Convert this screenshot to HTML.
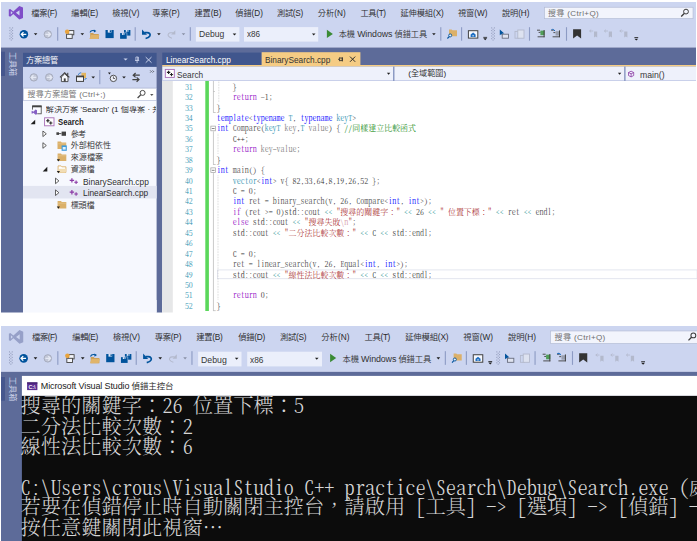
<!DOCTYPE html>
<html lang="zh-Hant"><head><meta charset="utf-8"><title>Visual Studio - Search</title>
<style>
html,body{margin:0;padding:0;background:#fff;}
body{width:697px;height:541px;position:relative;overflow:hidden;font-family:"Liberation Sans","Noto Sans CJK TC","Noto Sans CJK SC",sans-serif;font-size:8px;color:#1e1e1e;font-weight:350;}
.a{position:absolute;}
.t{position:absolute;white-space:pre;line-height:1;transform-origin:0 50%;}
.m{font-family:"Noto Serif CJK TC","Noto Serif CJK SC","Liberation Mono",monospace;font-feature-settings:"hwid";}
.f{font-feature-settings:normal;}
svg{position:absolute;overflow:visible;}
</style></head>
<body>
<svg width="697" height="541" viewBox="0 0 697 541" style="left:0;top:0">
<rect x="1.00" y="2.00" width="695.00" height="45.60" fill="#CCD5F0"/>
<path d="M1 47.6H696V300H162.25V312.5H156.6V300H23V312.5H1Z" fill="#5D6B99"/>
<rect x="1.00" y="51.70" width="4.00" height="24.30" fill="#46578E"/>
<rect x="544.45" y="7.25" width="148.60" height="11.40" fill="#F2F4FC" stroke="#b4bcd6" stroke-width="0.7"/>
<rect x="195.90" y="27.10" width="43.50" height="14.50" fill="#EBEFFB"/>
<rect x="244.00" y="27.10" width="74.20" height="14.50" fill="#EBEFFB"/>
<rect x="23.00" y="52.80" width="133.60" height="14.10" fill="#40568D"/>
<rect x="23.00" y="66.90" width="133.60" height="21.00" fill="#CCD5F0"/>
<rect x="23.30" y="88.20" width="133.00" height="12.50" fill="#ffffff" stroke="#c8cfe6" stroke-width="0.6"/>
<rect x="23.00" y="101.00" width="133.60" height="211.50" fill="#F6F8FE"/>
<rect x="23.00" y="185.90" width="133.60" height="12.60" fill="#E2E5F1"/>
<rect x="162.25" y="52.60" width="98.95" height="12.60" fill="#40568D"/>
<rect x="261.70" y="52.20" width="98.70" height="13.00" fill="#F5CC84"/>
<rect x="162.25" y="65.00" width="533.75" height="1.60" fill="#F5CC84"/>
<rect x="162.25" y="66.50" width="533.75" height="14.50" fill="#EEF1FB"/>
<rect x="162.25" y="80.00" width="533.75" height="1.00" fill="#C9D0EA"/>
<rect x="393.00" y="66.50" width="1.50" height="14.50" fill="#8D9BC4"/>
<rect x="624.10" y="66.50" width="1.50" height="14.50" fill="#8D9BC4"/>
<rect x="162.25" y="81.00" width="534.75" height="231.50" fill="#ffffff"/>
<rect x="162.25" y="81.00" width="10.55" height="231.50" fill="#E6E7E8"/>
<rect x="205.30" y="81.00" width="3.60" height="230.00" fill="#5BD75B"/>
<rect x="217.40" y="269.92" width="479.70" height="8.80" fill="none" stroke="#dcdfeb" stroke-width="0.8"/>
<rect x="212.95" y="81.00" width="0.70" height="31.68" fill="#b4b4b4"/>
<rect x="213.30" y="112.03" width="2.40" height="0.70" fill="#b4b4b4"/>
<rect x="213.30" y="91.25" width="1.60" height="0.70" fill="#b4b4b4"/>
<rect x="212.95" y="131.36" width="0.70" height="33.52" fill="#b4b4b4"/>
<rect x="213.30" y="164.23" width="2.40" height="0.70" fill="#b4b4b4"/>
<rect x="212.95" y="173.12" width="0.70" height="137.92" fill="#b4b4b4"/>
<rect x="213.30" y="310.39" width="2.40" height="0.70" fill="#b4b4b4"/>
<rect x="210.85" y="126.11" width="4.70" height="4.70" fill="#ffffff" stroke="#a0a0a0" stroke-width="0.7"/>
<rect x="211.80" y="128.11" width="2.80" height="0.70" fill="#555"/>
<rect x="210.85" y="167.87" width="4.70" height="4.70" fill="#ffffff" stroke="#a0a0a0" stroke-width="0.7"/>
<rect x="211.80" y="169.87" width="2.80" height="0.70" fill="#555"/>
<path d="M218.80 80.60V102.04" stroke="#bdbdbd" stroke-width="0.7" stroke-dasharray="0.7 0.9" fill="none"/>
<path d="M218.00 175.56V300.40" stroke="#bdbdbd" stroke-width="0.7" stroke-dasharray="0.7 0.9" fill="none"/>
<path d="M218.00 133.80V154.24" stroke="#bdbdbd" stroke-width="0.7" stroke-dasharray="0.7 0.9" fill="none"/>
<rect x="1.00" y="326.00" width="696.00" height="45.80" fill="#CCD5F0"/>
<rect x="1.00" y="371.80" width="696.00" height="169.20" fill="#5D6B99"/>
<rect x="1.00" y="377.00" width="4.00" height="23.70" fill="#46578E"/>
<rect x="550.45" y="330.95" width="149.20" height="12.60" fill="#F2F4FC" stroke="#b4bcd6" stroke-width="0.7"/>
<rect x="198.10" y="351.70" width="43.40" height="14.70" fill="#EBEFFB"/>
<rect x="247.20" y="351.70" width="74.80" height="14.70" fill="#EBEFFB"/>
<rect x="21.90" y="375.90" width="675.10" height="20.00" fill="#ffffff"/>
<rect x="21.90" y="395.90" width="675.10" height="145.10" fill="#0C0C0C"/>
</svg>
<span class="t" style="left:9.00px;top:-4.00px;font-size:8.00px;color:#d5dcf0;top:52.4px;left:16.4px;line-height:1;transform-origin:0 0;transform:rotate(90deg);">工具箱</span>
<span class="t" style="left:31.20px;top:9.80px;font-size:8.20px;color:#2a2a2a;letter-spacing:-0.211px;">檔案(F)</span>
<span class="t" style="left:71.30px;top:9.80px;font-size:8.20px;color:#2a2a2a;letter-spacing:-0.099px;">編輯(E)</span>
<span class="t" style="left:112.20px;top:9.80px;font-size:8.20px;color:#2a2a2a;letter-spacing:-0.024px;">檢視(V)</span>
<span class="t" style="left:152.30px;top:9.80px;font-size:8.20px;color:#2a2a2a;letter-spacing:0.051px;">專案(P)</span>
<span class="t" style="left:194.40px;top:9.80px;font-size:8.20px;color:#2a2a2a;letter-spacing:-0.049px;">建置(B)</span>
<span class="t" style="left:235.20px;top:9.80px;font-size:8.20px;color:#2a2a2a;letter-spacing:0.013px;">偵錯(D)</span>
<span class="t" style="left:277.00px;top:9.80px;font-size:8.20px;color:#2a2a2a;letter-spacing:-0.274px;">測試(S)</span>
<span class="t" style="left:317.80px;top:9.80px;font-size:8.20px;color:#2a2a2a;letter-spacing:0.037px;">分析(N)</span>
<span class="t" style="left:360.40px;top:9.80px;font-size:8.20px;color:#2a2a2a;letter-spacing:-0.286px;">工具(T)</span>
<span class="t" style="left:400.40px;top:9.80px;font-size:8.20px;color:#2a2a2a;letter-spacing:-0.045px;">延伸模組(X)</span>
<span class="t" style="left:457.90px;top:9.80px;font-size:8.20px;color:#2a2a2a;letter-spacing:-0.016px;">視窗(W)</span>
<span class="t" style="left:502.00px;top:9.80px;font-size:8.20px;color:#2a2a2a;letter-spacing:-0.088px;">說明(H)</span>
<span class="t" style="left:547.90px;top:9.50px;font-size:8.00px;color:#6d6d6d;letter-spacing:0.391px;">搜尋 (Ctrl+Q)</span>
<span class="t" style="left:198.70px;top:30.20px;font-size:8.60px;color:#383838;transform:scaleX(0.9989);">Debug</span>
<span class="t" style="left:246.90px;top:30.20px;font-size:8.60px;color:#383838;transform:scaleX(0.9452);">x86</span>
<span class="t" style="left:338.70px;top:30.30px;font-size:8.20px;color:#333;letter-spacing:-0.070px;">本機 <span style="font-size:8.8px">Windows</span> 偵錯工具</span>
<span class="t" style="left:26.00px;top:56.80px;font-size:8.20px;color:#ffffff;letter-spacing:-0.189px;">方案總管</span>
<span class="t" style="left:27.60px;top:90.60px;font-size:8.00px;color:#717171;letter-spacing:0.201px;">搜尋方案總管 (Ctrl+;)</span>
<span class="t" style="left:45.80px;top:105.85px;font-size:8.10px;color:#1e1e1e;width:110.5px;overflow:hidden;">解決方案 'Search' (1 個專案 · 共 1 個)</span>
<span class="t" style="left:58.00px;top:118.20px;font-size:8.60px;color:#1e1e1e;font-weight:700;transform:scaleX(0.8998);">Search</span>
<span class="t" style="left:70.70px;top:130.85px;font-size:8.10px;color:#2e2e2e;letter-spacing:-0.703px;">參考</span>
<span class="t" style="left:70.70px;top:142.35px;font-size:8.10px;color:#2e2e2e;letter-spacing:-0.046px;">外部相依性</span>
<span class="t" style="left:70.70px;top:154.15px;font-size:8.10px;color:#2e2e2e;letter-spacing:0.036px;">來源檔案</span>
<span class="t" style="left:70.70px;top:166.35px;font-size:8.10px;color:#2e2e2e;letter-spacing:-0.248px;">資源檔</span>
<span class="t" style="left:82.60px;top:177.60px;font-size:8.60px;color:#2e2e2e;transform:scaleX(0.9699);">BinarySearch.cpp</span>
<span class="t" style="left:82.60px;top:189.40px;font-size:8.60px;color:#2e2e2e;transform:scaleX(0.9677);">LinearSearch.cpp</span>
<span class="t" style="left:70.70px;top:202.05px;font-size:8.10px;color:#2e2e2e;letter-spacing:-0.248px;">標頭檔</span>
<span class="t" style="left:165.60px;top:55.95px;font-size:8.50px;color:#ffffff;transform:scaleX(0.9739);">LinearSearch.cpp</span>
<span class="t" style="left:264.80px;top:56.15px;font-size:8.50px;color:#333333;transform:scaleX(0.9733);">BinarySearch.cpp</span>
<span class="t" style="left:176.80px;top:70.70px;font-size:8.60px;color:#383838;transform:scaleX(0.9620);">Search</span>
<span class="t" style="left:408.20px;top:70.15px;font-size:8.10px;color:#1e1e1e;letter-spacing:0.024px;">(全域範圍)</span>
<span class="t" style="left:639.90px;top:70.70px;font-size:8.60px;color:#383838;transform:scaleX(1.0099);">main()</span>
<span class="t m" style="left:184.90px;top:82.62px;font-size:7.97px;color:#2b91af;">31</span>
<span class="t m" style="left:216.85px;top:82.62px;font-size:7.97px;color:#2e2e2e;font-weight:300;">    }</span>
<span class="t m" style="left:184.90px;top:93.06px;font-size:7.97px;color:#2b91af;">32</span>
<span class="t m" style="left:216.85px;top:93.06px;font-size:7.97px;color:#2e2e2e;font-weight:300;">    <span style="color:#8f08c4">return</span> -1;</span>
<span class="t m" style="left:184.90px;top:103.50px;font-size:7.97px;color:#2b91af;">33</span>
<span class="t m" style="left:216.85px;top:103.50px;font-size:7.97px;color:#2e2e2e;font-weight:300;">}</span>
<span class="t m" style="left:184.90px;top:113.94px;font-size:7.97px;color:#2b91af;">34</span>
<span class="t m" style="left:216.85px;top:113.94px;font-size:7.97px;color:#2e2e2e;font-weight:300;"><span style="color:#0000ff">template</span>&lt;<span style="color:#0000ff">typename</span> <span style="color:#2b91af">T</span>, <span style="color:#0000ff">typename</span> <span style="color:#2b91af">keyT</span>&gt;</span>
<span class="t m" style="left:184.90px;top:124.38px;font-size:7.97px;color:#2b91af;">35</span>
<span class="t m" style="left:216.85px;top:124.38px;font-size:7.97px;color:#2e2e2e;font-weight:300;"><span style="color:#0000ff">int</span> <span style="color:#4a4a4a">Compare</span>(<span style="color:#2b91af">keyT</span> <span style="color:#808080">key</span>,<span style="color:#2b91af">T</span> <span style="color:#808080">value</span>) { <span style="color:#008000">//同樣建立比較函式</span></span>
<span class="t m" style="left:184.90px;top:134.82px;font-size:7.97px;color:#2b91af;">36</span>
<span class="t m" style="left:216.85px;top:134.82px;font-size:7.97px;color:#2e2e2e;font-weight:300;">    C++;</span>
<span class="t m" style="left:184.90px;top:145.26px;font-size:7.97px;color:#2b91af;">37</span>
<span class="t m" style="left:216.85px;top:145.26px;font-size:7.97px;color:#2e2e2e;font-weight:300;">    <span style="color:#8f08c4">return</span> <span style="color:#808080">key</span>-<span style="color:#808080">value</span>;</span>
<span class="t m" style="left:184.90px;top:155.70px;font-size:7.97px;color:#2b91af;">38</span>
<span class="t m" style="left:216.85px;top:155.70px;font-size:7.97px;color:#2e2e2e;font-weight:300;">}</span>
<span class="t m" style="left:184.90px;top:166.14px;font-size:7.97px;color:#2b91af;">39</span>
<span class="t m" style="left:216.85px;top:166.14px;font-size:7.97px;color:#2e2e2e;font-weight:300;"><span style="color:#0000ff">int</span> <span style="color:#4a4a4a">main</span>() {</span>
<span class="t m" style="left:184.90px;top:176.58px;font-size:7.97px;color:#2b91af;">40</span>
<span class="t m" style="left:216.85px;top:176.58px;font-size:7.97px;color:#2e2e2e;font-weight:300;">    <span style="color:#2b91af">vector</span>&lt;<span style="color:#0000ff">int</span>&gt; <span style="color:#4a4a4a">v</span>{ 82,33,64,8,19,26,52 };</span>
<span class="t m" style="left:184.90px;top:187.02px;font-size:7.97px;color:#2b91af;">41</span>
<span class="t m" style="left:216.85px;top:187.02px;font-size:7.97px;color:#2e2e2e;font-weight:300;">    C = 0;</span>
<span class="t m" style="left:184.90px;top:197.46px;font-size:7.97px;color:#2b91af;">42</span>
<span class="t m" style="left:216.85px;top:197.46px;font-size:7.97px;color:#2e2e2e;font-weight:300;">    <span style="color:#0000ff">int</span> <span style="color:#4a4a4a">ret</span> = <span style="color:#4a4a4a">binary_search</span>(<span style="color:#4a4a4a">v</span>, 26, <span style="color:#4a4a4a">Compare</span>&lt;<span style="color:#0000ff">int</span>, <span style="color:#0000ff">int</span>&gt;);</span>
<span class="t m" style="left:184.90px;top:207.90px;font-size:7.97px;color:#2b91af;">43</span>
<span class="t m" style="left:216.85px;top:207.90px;font-size:7.97px;color:#2e2e2e;font-weight:300;">    <span style="color:#8f08c4">if</span> (<span style="color:#4a4a4a">ret</span> &gt;= 0)std::<span style="color:#4a4a4a">cout</span> <span style="color:#008080">&lt;&lt;</span> <span style="color:#a31515">"搜尋的關鍵字<span class="f">：</span>"</span> <span style="color:#008080">&lt;&lt;</span> 26 <span style="color:#008080">&lt;&lt;</span> <span style="color:#a31515">" 位置下標<span class="f">：</span>"</span> <span style="color:#008080">&lt;&lt;</span> <span style="color:#4a4a4a">ret</span> <span style="color:#008080">&lt;&lt;</span> <span style="color:#4a4a4a">endl</span>;</span>
<span class="t m" style="left:184.90px;top:218.34px;font-size:7.97px;color:#2b91af;">44</span>
<span class="t m" style="left:216.85px;top:218.34px;font-size:7.97px;color:#2e2e2e;font-weight:300;">    <span style="color:#8f08c4">else</span> std::<span style="color:#4a4a4a">cout</span> <span style="color:#008080">&lt;&lt;</span> <span style="color:#a31515">"搜尋失敗</span><span style="color:#d69aa7">\n</span><span style="color:#a31515">"</span>;</span>
<span class="t m" style="left:184.90px;top:228.78px;font-size:7.97px;color:#2b91af;">45</span>
<span class="t m" style="left:216.85px;top:228.78px;font-size:7.97px;color:#2e2e2e;font-weight:300;">    std::<span style="color:#4a4a4a">cout</span> <span style="color:#008080">&lt;&lt;</span> <span style="color:#a31515">"二分法比較次數<span class="f">：</span>"</span> <span style="color:#008080">&lt;&lt;</span> C <span style="color:#008080">&lt;&lt;</span> std::<span style="color:#4a4a4a">endl</span>;</span>
<span class="t m" style="left:184.90px;top:239.22px;font-size:7.97px;color:#2b91af;">46</span>
<span class="t m" style="left:184.90px;top:249.66px;font-size:7.97px;color:#2b91af;">47</span>
<span class="t m" style="left:216.85px;top:249.66px;font-size:7.97px;color:#2e2e2e;font-weight:300;">    C = 0;</span>
<span class="t m" style="left:184.90px;top:260.10px;font-size:7.97px;color:#2b91af;">48</span>
<span class="t m" style="left:216.85px;top:260.10px;font-size:7.97px;color:#2e2e2e;font-weight:300;">    <span style="color:#4a4a4a">ret</span> = <span style="color:#4a4a4a">linear_search</span>(<span style="color:#4a4a4a">v</span>, 26, <span style="color:#4a4a4a">Equal</span>&lt;<span style="color:#0000ff">int</span>, <span style="color:#0000ff">int</span>&gt;);</span>
<span class="t m" style="left:184.90px;top:270.54px;font-size:7.97px;color:#2b91af;">49</span>
<span class="t m" style="left:216.85px;top:270.54px;font-size:7.97px;color:#2e2e2e;font-weight:300;">    std::<span style="color:#4a4a4a">cout</span> <span style="color:#008080">&lt;&lt;</span> <span style="color:#a31515">"線性法比較次數<span class="f">：</span>"</span> <span style="color:#008080">&lt;&lt;</span> C <span style="color:#008080">&lt;&lt;</span> std::<span style="color:#4a4a4a">endl</span>;</span>
<span class="t m" style="left:184.90px;top:280.98px;font-size:7.97px;color:#2b91af;">50</span>
<span class="t m" style="left:184.90px;top:291.42px;font-size:7.97px;color:#2b91af;">51</span>
<span class="t m" style="left:216.85px;top:291.42px;font-size:7.97px;color:#2e2e2e;font-weight:300;">    <span style="color:#8f08c4">return</span> 0;</span>
<span class="t m" style="left:184.90px;top:301.86px;font-size:7.97px;color:#2b91af;">52</span>
<span class="t m" style="left:216.85px;top:301.86px;font-size:7.97px;color:#2e2e2e;font-weight:300;">}</span>
<span class="t" style="left:10.00px;top:-4.05px;font-size:8.10px;color:#d5dcf0;top:377.2px;left:16.3px;line-height:1;transform-origin:0 0;transform:rotate(90deg);">工具箱</span>
<span class="t" style="left:32.10px;top:333.35px;font-size:8.30px;color:#2a2a2a;letter-spacing:-0.476px;">檔案(F)</span>
<span class="t" style="left:72.30px;top:333.35px;font-size:8.30px;color:#2a2a2a;letter-spacing:-0.439px;">編輯(E)</span>
<span class="t" style="left:112.90px;top:333.35px;font-size:8.30px;color:#2a2a2a;letter-spacing:-0.139px;">檢視(V)</span>
<span class="t" style="left:154.80px;top:333.35px;font-size:8.30px;color:#2a2a2a;letter-spacing:-0.264px;">專案(P)</span>
<span class="t" style="left:196.30px;top:333.35px;font-size:8.30px;color:#2a2a2a;letter-spacing:-0.314px;">建置(B)</span>
<span class="t" style="left:238.20px;top:333.35px;font-size:8.30px;color:#2a2a2a;letter-spacing:-0.256px;">偵錯(D)</span>
<span class="t" style="left:280.10px;top:333.35px;font-size:8.30px;color:#2a2a2a;letter-spacing:-0.314px;">測試(S)</span>
<span class="t" style="left:321.20px;top:333.35px;font-size:8.30px;color:#2a2a2a;letter-spacing:0.069px;">分析(N)</span>
<span class="t" style="left:364.60px;top:333.35px;font-size:8.30px;color:#2a2a2a;letter-spacing:-0.351px;">工具(T)</span>
<span class="t" style="left:405.20px;top:333.35px;font-size:8.30px;color:#2a2a2a;letter-spacing:-0.142px;">延伸模組(X)</span>
<span class="t" style="left:463.30px;top:333.35px;font-size:8.30px;color:#2a2a2a;letter-spacing:-0.063px;">視窗(W)</span>
<span class="t" style="left:508.00px;top:333.35px;font-size:8.30px;color:#2a2a2a;letter-spacing:-0.006px;">說明(H)</span>
<span class="t" style="left:554.60px;top:333.65px;font-size:8.10px;color:#6d6d6d;letter-spacing:0.326px;">搜尋 (Ctrl+Q)</span>
<span class="t" style="left:200.70px;top:355.95px;font-size:8.70px;color:#383838;transform:scaleX(1.0074);">Debug</span>
<span class="t" style="left:249.80px;top:355.95px;font-size:8.70px;color:#383838;transform:scaleX(0.9561);">x86</span>
<span class="t" style="left:342.60px;top:354.65px;font-size:8.30px;color:#333;letter-spacing:-0.130px;">本機 <span style="font-size:8.9px">Windows</span> 偵錯工具</span>
<span class="t" style="left:40.80px;top:381.65px;font-size:8.50px;color:#1a1a1a;letter-spacing:-0.124px;"><span style="font-size:9.0px">Microsoft Visual Studio</span> 偵錯主控台</span>
<span class="t m" style="left:20.60px;top:395.47px;font-size:20.26px;color:#d6d6d6;font-weight:300;">搜尋的關鍵字<span class="f">：</span>26 位置下標<span class="f">：</span>5</span>
<span class="t m" style="left:20.60px;top:415.67px;font-size:20.26px;color:#d6d6d6;font-weight:300;">二分法比較次數<span class="f">：</span>2</span>
<span class="t m" style="left:20.60px;top:435.87px;font-size:20.26px;color:#d6d6d6;font-weight:300;">線性法比較次數<span class="f">：</span>6</span>
<span class="t m" style="left:20.60px;top:477.17px;font-size:20.26px;color:#d6d6d6;font-weight:300;">C:\Users\crous\VisualStudio C++ practice\Search\Debug\Search.exe (處理序 14532) 已結束，出現代碼 0。</span>
<span class="t m" style="left:20.60px;top:496.47px;font-size:20.26px;color:#d6d6d6;font-weight:300;">若要在偵錯停止時自動關閉主控台，請啟用 [工具] -&gt; [選項] -&gt; [偵錯] -&gt; [偵錯停止時，自動關閉主控台]。</span>
<span class="t m" style="left:20.60px;top:516.67px;font-size:20.26px;color:#d6d6d6;font-weight:300;">按任意鍵關閉此視窗…</span>
<svg width="697" height="541" viewBox="0 0 697 541" style="left:0;top:0"><path fill="#7F4DC8" d="M19.3 6.0 L23 7.6 V18.0 L19.3 19.6 L13.3 14.1 L10.2 16.7 L8.8 16.0 V9.6 L10.2 8.9 L13.3 11.5 Z M19.5 10.2 L15.9 12.8 L19.5 15.4 Z M10.8 11.1 V14.5 L12.7 12.8 Z" fill-rule="evenodd" transform="translate(0,0)"/><rect x="9.40" y="27.40" width="1" height="1" fill="#8f98b8"/><rect x="12.10" y="27.40" width="1" height="1" fill="#8f98b8"/><rect x="10.75" y="28.75" width="1" height="1" fill="#8f98b8"/><rect x="9.40" y="30.10" width="1" height="1" fill="#8f98b8"/><rect x="12.10" y="30.10" width="1" height="1" fill="#8f98b8"/><rect x="10.75" y="31.45" width="1" height="1" fill="#8f98b8"/><rect x="9.40" y="32.80" width="1" height="1" fill="#8f98b8"/><rect x="12.10" y="32.80" width="1" height="1" fill="#8f98b8"/><rect x="10.75" y="34.15" width="1" height="1" fill="#8f98b8"/><rect x="9.40" y="35.50" width="1" height="1" fill="#8f98b8"/><rect x="12.10" y="35.50" width="1" height="1" fill="#8f98b8"/><rect x="10.75" y="36.85" width="1" height="1" fill="#8f98b8"/><rect x="9.40" y="38.20" width="1" height="1" fill="#8f98b8"/><rect x="12.10" y="38.20" width="1" height="1" fill="#8f98b8"/><rect x="10.75" y="39.55" width="1" height="1" fill="#8f98b8"/><circle cx="23.9" cy="34.3" r="4.25" fill="#00539C"/><path d="M26.30 34.3h-4.40M23.50 32.10l-2.20 2.2l2.20 2.2" stroke="#fff" stroke-width="1.3" fill="none"/><path d="M33.80 33.30h3.60l-1.80 2.00z" fill="#1e1e1e"/><circle cx="47.8" cy="34.3" r="3.7" fill="#C2C7D7" stroke="#A3A8BA" stroke-width="0.9"/><path d="M45.40 34.3h4.40M48.20 32.10l2.20 2.2l-2.20 2.2" stroke="#E4E8F3" stroke-width="1.3" fill="none"/><rect x="57.15" y="27.2" width="1.1" height="13.50" fill="#8D9BC4"/><rect x="68.2" y="30.6" width="5.6" height="4.2" fill="#f4f6fb" stroke="#424242" stroke-width="0.9"/><rect x="66.6" y="34.2" width="5.6" height="4.2" fill="#f4f6fb" stroke="#424242" stroke-width="0.9"/><circle cx="67.2" cy="31.8" r="2.3" fill="#E8A33D"/><path d="M80.50 33.30h3.60l-1.80 2.00z" fill="#1e1e1e"/><path d="M90.2 33.0h3l0.8 0.9h4.8v5.1h-8.6z" fill="#CDA058"/><path d="M89.4 39l1.7-4.0h8.3l-1.5 4.0z" fill="#E0B469"/><path d="M90 32.4c0.6-1.6 2.4-2.2 4.6-1.6" stroke="#00539C" stroke-width="1.1" fill="none"/><path d="M93.8 29.4l2.6 1.5-2.4 1.7z" fill="#00539C"/><rect x="105.50" y="30.00" width="8.20" height="8.10" fill="#00539C"/><rect x="107.80" y="30.00" width="3.61" height="2.59" fill="#dfe6f6"/><rect x="109.76" y="30.30" width="1.31" height="1.94" fill="#00539C"/><rect x="124.00" y="30.00" width="6.40" height="5.60" fill="#00539C"/><rect x="125.79" y="30.00" width="2.82" height="1.79" fill="#dfe6f6"/><rect x="127.33" y="30.30" width="1.02" height="1.34" fill="#00539C"/><rect x="119.6" y="32.6" width="7.6" height="6.6" fill="#CCD5F0"/><rect x="120.10" y="33.10" width="6.60" height="5.70" fill="#00539C"/><rect x="121.95" y="33.10" width="2.90" height="1.82" fill="#dfe6f6"/><rect x="123.53" y="33.40" width="1.06" height="1.37" fill="#00539C"/><rect x="134.65" y="27.2" width="1.1" height="13.50" fill="#8D9BC4"/><path d="M144.4 32.6h2.6c2.6 0 3.6 1.6 2.9 3.3c-0.5 1.2-1.9 2-4.3 2.6" stroke="#00539C" stroke-width="1.7" fill="none"/><path d="M142.0 29.6v5.2h5.0z" fill="#00539C"/><path d="M157.10 33.30h3.60l-1.80 2.00z" fill="#1e1e1e"/><path d="M173.2 32.8h-2.4c-2.3 0-3.1 1.5-2.5 3c0.5 1.1 1.6 1.8 3.6 2.4" stroke="#B3B9CC" stroke-width="1.1" fill="none"/><path d="M175.3 30.2v4.4h-4.2z" fill="#B3B9CC"/><path d="M181.70 33.30h3.60l-1.80 2.00z" fill="#8a90a6"/><rect x="189.75" y="27.2" width="1.1" height="13.50" fill="#8D9BC4"/><path d="M232.70 33.60h3.60l-1.80 2.00z" fill="#1e1e1e"/><path d="M311.90 33.60h3.60l-1.80 2.00z" fill="#1e1e1e"/><path d="M326.9 29.7v8.4l6-4.2z" fill="#3A8A34"/><path d="M432.10 33.30h3.60l-1.80 2.00z" fill="#1e1e1e"/><rect x="440.25" y="27.2" width="1.1" height="13.50" fill="#8D9BC4"/><path d="M449 29.4h2.6l0.8 0.9h4.6v6h-8z" fill="#DBB069"/><circle cx="450.2" cy="35.4" r="1.5" fill="#e9eefc" stroke="#00539C" stroke-width="0.9"/><path d="M449.2 36.6l-1.8 1.9" stroke="#00539C" stroke-width="1.1"/><rect x="461.05" y="27.2" width="1.1" height="13.50" fill="#8D9BC4"/><rect x="468.4" y="30.7" width="9.4" height="7.4" fill="#f6f8fd" stroke="#424242" stroke-width="1.0"/><path d="M470.6 34.6l2.5-2l2.5 2v2.3h-5z" fill="#1f6fc2"/><rect x="472.5" y="35.2" width="1.2" height="1.2" fill="#fff"/><rect x="483.3" y="36.9" width="3.8" height="0.8" fill="#1e1e1e"/><path d="M483.30 38.35h3.80l-1.90 1.90z" fill="#1e1e1e"/><rect x="491.20" y="27.40" width="1" height="1" fill="#8f98b8"/><rect x="493.90" y="27.40" width="1" height="1" fill="#8f98b8"/><rect x="492.55" y="28.75" width="1" height="1" fill="#8f98b8"/><rect x="491.20" y="30.10" width="1" height="1" fill="#8f98b8"/><rect x="493.90" y="30.10" width="1" height="1" fill="#8f98b8"/><rect x="492.55" y="31.45" width="1" height="1" fill="#8f98b8"/><rect x="491.20" y="32.80" width="1" height="1" fill="#8f98b8"/><rect x="493.90" y="32.80" width="1" height="1" fill="#8f98b8"/><rect x="492.55" y="34.15" width="1" height="1" fill="#8f98b8"/><rect x="491.20" y="35.50" width="1" height="1" fill="#8f98b8"/><rect x="493.90" y="35.50" width="1" height="1" fill="#8f98b8"/><rect x="492.55" y="36.85" width="1" height="1" fill="#8f98b8"/><rect x="491.20" y="38.20" width="1" height="1" fill="#8f98b8"/><rect x="493.90" y="38.20" width="1" height="1" fill="#8f98b8"/><rect x="492.55" y="39.55" width="1" height="1" fill="#8f98b8"/><path d="M499.8 29.6v5.6l1.5-1.3l1.2 2l0.9-0.5l-1.1-2h2z" fill="#00539C"/><rect x="502.2" y="34.2" width="6.3" height="4.0" fill="#dfe3ef" stroke="#6a6f80" stroke-width="0.9"/><rect x="515" y="31.4" width="4" height="6.8" fill="none" stroke="#B3B9CC" stroke-width="0.9"/><rect x="517.8" y="30" width="6.2" height="8.2" fill="#dde2f0" stroke="#B3B9CC" stroke-width="0.9"/><rect x="528.95" y="27.2" width="1.1" height="13.50" fill="#8D9BC4"/><path d="M537 30.2h3M538.6 32.4h2M537.6 36.8h7" stroke="#424242" stroke-width="0.9"/><rect x="540.4" y="30.6" width="4.2" height="4.6" fill="#4f9e58"/><rect x="543.6" y="30" width="1" height="7.2" fill="#424242"/><path d="M551.2 30.2h2.6M553.4 32.6h2M552.6 36.8h7.2" stroke="#424242" stroke-width="0.9"/><rect x="555.6" y="31.2" width="4" height="4.4" fill="#9aa0b0"/><rect x="559" y="30.4" width="1" height="6.8" fill="#424242"/><path d="M551.4 29.8c1.4-0.9 2.8-0.4 3.4 1.2" stroke="#1f6fc2" stroke-width="1.0" fill="none"/><rect x="565.95" y="27.2" width="1.1" height="13.50" fill="#8D9BC4"/><path d="M573.1 29.2h8v9.2l-4-3l-4 3z" fill="#333333"/><path d="M594.0 31.6h3.2v6l-1.6-1.2l-1.6 1.2z" fill="#B3B9CC"/><path d="M589.6 31h3.6M591.2 29.6l-1.6 1.4l1.6 1.4" stroke="#B3B9CC" stroke-width="0.8" fill="none"/><path d="M608.8 31.6h3.2v6l-1.6-1.2l-1.6 1.2z" fill="#B3B9CC"/><path d="M604.4 31h3.6M606.0 29.6l-1.6 1.4l1.6 1.4" stroke="#B3B9CC" stroke-width="0.8" fill="none"/><path d="M624.2 31.6h3.2v6l-1.6-1.2l-1.6 1.2z" fill="#B3B9CC"/><path d="M619.8 31h3.6M621.4 29.6l-1.6 1.4l1.6 1.4" stroke="#B3B9CC" stroke-width="0.8" fill="none"/><rect x="634.4" y="37.2" width="3.8" height="0.8" fill="#1e1e1e"/><path d="M634.40 38.65h3.80l-1.90 1.90z" fill="#1e1e1e"/><circle cx="686.0" cy="11.6" r="2.4" fill="none" stroke="#3b3b3b" stroke-width="1.0"/><path d="M684.2 13.5l-3 3" stroke="#3b3b3b" stroke-width="1.3"/><path d="M123.50 58.40h4.20l-2.10 2.20z" fill="#C9D1EA"/><path d="M135.9 57h2.4v3.4h-2.4zM135 60.5h4.2M137.1 60.5v2.6" stroke="#C9D1EA" stroke-width="0.8" fill="none"/><rect x="137.4" y="57" width="0.9" height="3.4" fill="#C9D1EA"/><path d="M145.7 57.1l5.8 5.6M151.5 57.1l-5.8 5.6" stroke="#C9D1EA" stroke-width="1.0"/><circle cx="33.8" cy="77.4" r="3.7" fill="#C2C7D7" stroke="#A3A8BA" stroke-width="0.9"/><path d="M36.20 77.4h-4.40M33.40 75.20l-2.20 2.2l2.20 2.2" stroke="#E4E8F3" stroke-width="1.3" fill="none"/><circle cx="49.2" cy="77.4" r="3.7" fill="#C2C7D7" stroke="#A3A8BA" stroke-width="0.9"/><path d="M46.80 77.4h4.40M49.60 75.20l2.20 2.2l-2.20 2.2" stroke="#E4E8F3" stroke-width="1.3" fill="none"/><path d="M60 77.4l4.7-4.6l4.7 4.6" fill="none" stroke="#424242" stroke-width="1.1"/><path d="M61.4 77v4.6h6.6V77l-3.3-3.2z" fill="#f7f8fc" stroke="#424242" stroke-width="0.9"/><rect x="63.8" y="78.4" width="1.9" height="3.2" fill="#424242"/><rect x="67.2" y="72.8" width="1.1" height="2.4" fill="#424242"/><rect x="81.4" y="72.8" width="4.6" height="5.4" fill="#E2B55E"/><rect x="76.5" y="76.2" width="7" height="5.2" fill="#f7f8fc" stroke="#424242" stroke-width="1.0"/><rect x="76" y="75.8" width="8" height="1.5" fill="#424242"/><path d="M78.4 74.8c0.4-1.4 1.4-2 2.8-2" stroke="#1f6fc2" stroke-width="0.9" fill="none"/><path d="M84.6 79.4c0.9 0 1.6-0.6 1.8-1.4" stroke="#1f6fc2" stroke-width="0.9" fill="none"/><path d="M91.40 76.50h3.60l-1.80 2.00z" fill="#1e1e1e"/><rect x="99.3" y="70" width="1.0" height="14.2" fill="#8D9BC4"/><path d="M108 72.6h2.8l-1.4 1.9z" fill="#1e1e1e"/><circle cx="113.4" cy="78.4" r="3.2" fill="#eef1fb" stroke="#424242" stroke-width="0.9"/><path d="M113.4 76.4v2.1h1.7" stroke="#424242" stroke-width="0.8" fill="none"/><path d="M122.20 76.50h3.60l-1.80 2.00z" fill="#1e1e1e"/><path d="M133.2 75.2h6.6M135.6 73l-2.4 2.2l2.4 2.2" stroke="#424242" stroke-width="1.2" fill="none"/><path d="M132.4 79.6h6.6M136.6 77.4l2.4 2.2l-2.4 2.2" stroke="#424242" stroke-width="1.2" fill="none"/><path d="M150.3 70.5l1 1l-1 1M152.6 70.5l1 1l-1 1" stroke="#1e1e1e" stroke-width="0.7" fill="none"/><circle cx="142.6" cy="92.9" r="2.5" fill="none" stroke="#4a4a4a" stroke-width="1.0"/><path d="M140.8 94.8l-3.2 3.2" stroke="#4a4a4a" stroke-width="1.3"/><path d="M150.10 94.05h3.40l-1.70 1.90z" fill="#555"/><rect x="32.6" y="106" width="8.6" height="7.8" fill="#fbfcff" stroke="#424242" stroke-width="0.8"/><rect x="32.2" y="105.5" width="9.4" height="1.8" fill="#424242"/><rect x="31.4" y="109.6" width="5.8" height="5.4" fill="#F6F8FE"/><path fill="#8661C5" d="M35.6 109.6l1.4 0.6v4l-1.4 0.6l-2.3-2.1l-1.2 0.95l-0.5-0.25v-2.4l0.5-0.25l1.2 0.95z"/><path d="M35.20 119.70v4.6h-4.6z" fill="#1e1e1e"/><rect x="44.60" y="117.80" width="9.4" height="8.0" fill="#fff" stroke="#A66BB5" stroke-width="0.9"/><path d="M46.20 120.80h3.4M47.90 119.10v3.4" stroke="#1e1e1e" stroke-width="1.1"/><path d="M49.20 123.00h3.2M50.80 121.40v3.2" stroke="#1e1e1e" stroke-width="1.0"/><path d="M42.90 131.00v5.6l3.4-2.8z" fill="#fff" stroke="#3b3b3b" stroke-width="0.8" stroke-linejoin="round"/><rect x="56.4" y="132.3" width="2.6" height="2.6" fill="#424242"/><rect x="59" y="133.2" width="2.4" height="0.9" fill="#424242"/><rect x="61.6" y="131.6" width="4.4" height="4.2" fill="#424242"/><path d="M42.90 142.70v5.6l3.4-2.8z" fill="#fff" stroke="#3b3b3b" stroke-width="0.8" stroke-linejoin="round"/><path d="M57.50 141.60h3.4l0.8 0.9h4.5v6.5h-8.7z" fill="#DBB069"/><path d="M57.50 143.80h8.7" stroke="#E9CF9F" stroke-width="0.5"/><rect x="61.6" y="145.4" width="5.2" height="5.4" fill="#3D9BDD"/><rect x="62.7" y="147" width="3" height="2.6" fill="#dff0fb"/><path d="M57.60 153.60h3.4l0.8 0.9h4.5v6.5h-8.7z" fill="#DBB069"/><path d="M57.60 155.80h8.7" stroke="#E9CF9F" stroke-width="0.5"/><path d="M56.80 159.20h3.2l-1.6 2.2z" fill="#1e1e1e"/><path d="M47.30 166.80v4.6h-4.6z" fill="#1e1e1e"/><path d="M58.10 165.90h3l0.8 0.9h4v5.6h-7.8z" fill="#fff" stroke="#DBB069" stroke-width="0.9"/><path d="M57.80 172.40l1.5-3.6h7.4l-1.4 3.6z" fill="#F1DDB4"/><path d="M56.80 171.00h3.2l-1.6 2.2z" fill="#1e1e1e"/><path d="M55.50 178.10v5.6l3.4-2.8z" fill="#fff" stroke="#3b3b3b" stroke-width="0.8" stroke-linejoin="round"/><path d="M69.70 180.40h4.4M71.90 178.20v4.4" stroke="#8B3AA5" stroke-width="1.2"/><path d="M74.30 182.20h3.6M76.10 180.40v3.6" stroke="#8B3AA5" stroke-width="1.1"/><path d="M55.50 189.90v5.6l3.4-2.8z" fill="#fff" stroke="#3b3b3b" stroke-width="0.8" stroke-linejoin="round"/><path d="M69.70 192.20h4.4M71.90 190.00v4.4" stroke="#8B3AA5" stroke-width="1.2"/><path d="M74.30 194.00h3.6M76.10 192.20v3.6" stroke="#8B3AA5" stroke-width="1.1"/><path d="M57.60 201.00h3.4l0.8 0.9h4.5v6.5h-8.7z" fill="#DBB069"/><path d="M57.60 203.20h8.7" stroke="#E9CF9F" stroke-width="0.5"/><path d="M56.80 206.60h3.2l-1.6 2.2z" fill="#1e1e1e"/><path d="M338 59.3h1.6M339.6 57.4v3.8M339.6 58h2.6v2.6h-2.6M342.4 57.2v4.2" stroke="#2b2b2b" stroke-width="0.8" fill="none"/><path d="M350 56.6l5.2 5.2M355.2 56.6l-5.2 5.2" stroke="#2b2b2b" stroke-width="1.0"/><rect x="165.30" y="69.40" width="9.0" height="8.0" fill="#fff" stroke="#A66BB5" stroke-width="0.9"/><path d="M166.90 72.40h3.4M168.60 70.70v3.4" stroke="#1e1e1e" stroke-width="1.1"/><path d="M169.90 74.60h3.2M171.50 73.00v3.2" stroke="#1e1e1e" stroke-width="1.0"/><path d="M386.90 72.85h3.40l-1.70 1.90z" fill="#1e1e1e"/><path d="M617.90 72.85h3.40l-1.70 1.90z" fill="#1e1e1e"/><path d="M631.1 71.2l2.6 1.3v3l-2.6 1.4l-2.6-1.4v-3z M628.5 72.5l2.6 1.3l2.6-1.3M631.1 73.8v3.1" fill="none" stroke="#8B3AA5" stroke-width="0.8"/><g transform="translate(-0.53,323.68) scale(1.0115)"><path fill="#96A0C8" d="M19.3 6.0 L23 7.6 V18.0 L19.3 19.6 L13.3 14.1 L10.2 16.7 L8.8 16.0 V9.6 L10.2 8.9 L13.3 11.5 Z M19.5 10.2 L15.9 12.8 L19.5 15.4 Z M10.8 11.1 V14.5 L12.7 12.8 Z" fill-rule="evenodd" transform="translate(0.5,0.3)"/><rect x="9.40" y="27.40" width="1" height="1" fill="#8f98b8"/><rect x="12.10" y="27.40" width="1" height="1" fill="#8f98b8"/><rect x="10.75" y="28.75" width="1" height="1" fill="#8f98b8"/><rect x="9.40" y="30.10" width="1" height="1" fill="#8f98b8"/><rect x="12.10" y="30.10" width="1" height="1" fill="#8f98b8"/><rect x="10.75" y="31.45" width="1" height="1" fill="#8f98b8"/><rect x="9.40" y="32.80" width="1" height="1" fill="#8f98b8"/><rect x="12.10" y="32.80" width="1" height="1" fill="#8f98b8"/><rect x="10.75" y="34.15" width="1" height="1" fill="#8f98b8"/><rect x="9.40" y="35.50" width="1" height="1" fill="#8f98b8"/><rect x="12.10" y="35.50" width="1" height="1" fill="#8f98b8"/><rect x="10.75" y="36.85" width="1" height="1" fill="#8f98b8"/><rect x="9.40" y="38.20" width="1" height="1" fill="#8f98b8"/><rect x="12.10" y="38.20" width="1" height="1" fill="#8f98b8"/><rect x="10.75" y="39.55" width="1" height="1" fill="#8f98b8"/><circle cx="23.9" cy="34.3" r="4.25" fill="#00539C"/><path d="M26.30 34.3h-4.40M23.50 32.10l-2.20 2.2l2.20 2.2" stroke="#fff" stroke-width="1.3" fill="none"/><path d="M33.80 33.30h3.60l-1.80 2.00z" fill="#1e1e1e"/><circle cx="47.8" cy="34.3" r="3.7" fill="#C2C7D7" stroke="#A3A8BA" stroke-width="0.9"/><path d="M45.40 34.3h4.40M48.20 32.10l2.20 2.2l-2.20 2.2" stroke="#E4E8F3" stroke-width="1.3" fill="none"/><rect x="57.15" y="27.2" width="1.1" height="13.50" fill="#8D9BC4"/><rect x="68.2" y="30.6" width="5.6" height="4.2" fill="#f4f6fb" stroke="#424242" stroke-width="0.9"/><rect x="66.6" y="34.2" width="5.6" height="4.2" fill="#f4f6fb" stroke="#424242" stroke-width="0.9"/><circle cx="67.2" cy="31.8" r="2.3" fill="#E8A33D"/><path d="M80.50 33.30h3.60l-1.80 2.00z" fill="#1e1e1e"/><path d="M90.2 33.0h3l0.8 0.9h4.8v5.1h-8.6z" fill="#CDA058"/><path d="M89.4 39l1.7-4.0h8.3l-1.5 4.0z" fill="#E0B469"/><path d="M90 32.4c0.6-1.6 2.4-2.2 4.6-1.6" stroke="#00539C" stroke-width="1.1" fill="none"/><path d="M93.8 29.4l2.6 1.5-2.4 1.7z" fill="#00539C"/><rect x="105.50" y="30.00" width="8.20" height="8.10" fill="#00539C"/><rect x="107.80" y="30.00" width="3.61" height="2.59" fill="#dfe6f6"/><rect x="109.76" y="30.30" width="1.31" height="1.94" fill="#00539C"/><rect x="124.00" y="30.00" width="6.40" height="5.60" fill="#00539C"/><rect x="125.79" y="30.00" width="2.82" height="1.79" fill="#dfe6f6"/><rect x="127.33" y="30.30" width="1.02" height="1.34" fill="#00539C"/><rect x="119.6" y="32.6" width="7.6" height="6.6" fill="#CCD5F0"/><rect x="120.10" y="33.10" width="6.60" height="5.70" fill="#00539C"/><rect x="121.95" y="33.10" width="2.90" height="1.82" fill="#dfe6f6"/><rect x="123.53" y="33.40" width="1.06" height="1.37" fill="#00539C"/><rect x="134.65" y="27.2" width="1.1" height="13.50" fill="#8D9BC4"/><path d="M144.4 32.6h2.6c2.6 0 3.6 1.6 2.9 3.3c-0.5 1.2-1.9 2-4.3 2.6" stroke="#00539C" stroke-width="1.7" fill="none"/><path d="M142.0 29.6v5.2h5.0z" fill="#00539C"/><path d="M157.10 33.30h3.60l-1.80 2.00z" fill="#1e1e1e"/><path d="M173.2 32.8h-2.4c-2.3 0-3.1 1.5-2.5 3c0.5 1.1 1.6 1.8 3.6 2.4" stroke="#B3B9CC" stroke-width="1.1" fill="none"/><path d="M175.3 30.2v4.4h-4.2z" fill="#B3B9CC"/><path d="M181.70 33.30h3.60l-1.80 2.00z" fill="#8a90a6"/><rect x="189.75" y="27.2" width="1.1" height="13.50" fill="#8D9BC4"/><path d="M232.70 33.60h3.60l-1.80 2.00z" fill="#1e1e1e"/><path d="M311.90 33.60h3.60l-1.80 2.00z" fill="#1e1e1e"/><path d="M326.9 29.7v8.4l6-4.2z" fill="#3A8A34"/><path d="M432.10 33.30h3.60l-1.80 2.00z" fill="#1e1e1e"/><rect x="440.25" y="27.2" width="1.1" height="13.50" fill="#8D9BC4"/><path d="M449 29.4h2.6l0.8 0.9h4.6v6h-8z" fill="#DBB069"/><circle cx="450.2" cy="35.4" r="1.5" fill="#e9eefc" stroke="#00539C" stroke-width="0.9"/><path d="M449.2 36.6l-1.8 1.9" stroke="#00539C" stroke-width="1.1"/><rect x="461.05" y="27.2" width="1.1" height="13.50" fill="#8D9BC4"/><rect x="468.4" y="30.7" width="9.4" height="7.4" fill="#f6f8fd" stroke="#424242" stroke-width="1.0"/><path d="M470.6 34.6l2.5-2l2.5 2v2.3h-5z" fill="#1f6fc2"/><rect x="472.5" y="35.2" width="1.2" height="1.2" fill="#fff"/><rect x="483.3" y="36.9" width="3.8" height="0.8" fill="#1e1e1e"/><path d="M483.30 38.35h3.80l-1.90 1.90z" fill="#1e1e1e"/><rect x="491.20" y="27.40" width="1" height="1" fill="#8f98b8"/><rect x="493.90" y="27.40" width="1" height="1" fill="#8f98b8"/><rect x="492.55" y="28.75" width="1" height="1" fill="#8f98b8"/><rect x="491.20" y="30.10" width="1" height="1" fill="#8f98b8"/><rect x="493.90" y="30.10" width="1" height="1" fill="#8f98b8"/><rect x="492.55" y="31.45" width="1" height="1" fill="#8f98b8"/><rect x="491.20" y="32.80" width="1" height="1" fill="#8f98b8"/><rect x="493.90" y="32.80" width="1" height="1" fill="#8f98b8"/><rect x="492.55" y="34.15" width="1" height="1" fill="#8f98b8"/><rect x="491.20" y="35.50" width="1" height="1" fill="#8f98b8"/><rect x="493.90" y="35.50" width="1" height="1" fill="#8f98b8"/><rect x="492.55" y="36.85" width="1" height="1" fill="#8f98b8"/><rect x="491.20" y="38.20" width="1" height="1" fill="#8f98b8"/><rect x="493.90" y="38.20" width="1" height="1" fill="#8f98b8"/><rect x="492.55" y="39.55" width="1" height="1" fill="#8f98b8"/><path d="M499.8 29.6v5.6l1.5-1.3l1.2 2l0.9-0.5l-1.1-2h2z" fill="#00539C"/><rect x="502.2" y="34.2" width="6.3" height="4.0" fill="#dfe3ef" stroke="#6a6f80" stroke-width="0.9"/><rect x="515" y="31.4" width="4" height="6.8" fill="none" stroke="#B3B9CC" stroke-width="0.9"/><rect x="517.8" y="30" width="6.2" height="8.2" fill="#dde2f0" stroke="#B3B9CC" stroke-width="0.9"/><rect x="528.95" y="27.2" width="1.1" height="13.50" fill="#8D9BC4"/><path d="M537 30.2h3M538.6 32.4h2M537.6 36.8h7" stroke="#424242" stroke-width="0.9"/><rect x="540.4" y="30.6" width="4.2" height="4.6" fill="#4f9e58"/><rect x="543.6" y="30" width="1" height="7.2" fill="#424242"/><path d="M551.2 30.2h2.6M553.4 32.6h2M552.6 36.8h7.2" stroke="#424242" stroke-width="0.9"/><rect x="555.6" y="31.2" width="4" height="4.4" fill="#9aa0b0"/><rect x="559" y="30.4" width="1" height="6.8" fill="#424242"/><path d="M551.4 29.8c1.4-0.9 2.8-0.4 3.4 1.2" stroke="#1f6fc2" stroke-width="1.0" fill="none"/><rect x="565.95" y="27.2" width="1.1" height="13.50" fill="#8D9BC4"/><path d="M573.1 29.2h8v9.2l-4-3l-4 3z" fill="#333333"/><path d="M594.0 31.6h3.2v6l-1.6-1.2l-1.6 1.2z" fill="#B3B9CC"/><path d="M589.6 31h3.6M591.2 29.6l-1.6 1.4l1.6 1.4" stroke="#B3B9CC" stroke-width="0.8" fill="none"/><path d="M608.8 31.6h3.2v6l-1.6-1.2l-1.6 1.2z" fill="#B3B9CC"/><path d="M604.4 31h3.6M606.0 29.6l-1.6 1.4l1.6 1.4" stroke="#B3B9CC" stroke-width="0.8" fill="none"/><path d="M624.2 31.6h3.2v6l-1.6-1.2l-1.6 1.2z" fill="#B3B9CC"/><path d="M619.8 31h3.6M621.4 29.6l-1.6 1.4l1.6 1.4" stroke="#B3B9CC" stroke-width="0.8" fill="none"/><rect x="634.4" y="37.2" width="3.8" height="0.8" fill="#1e1e1e"/><path d="M634.40 38.65h3.80l-1.90 1.90z" fill="#1e1e1e"/><circle cx="686.0" cy="11.6" r="2.4" fill="none" stroke="#3b3b3b" stroke-width="1.0"/><path d="M684.2 13.5l-3 3" stroke="#3b3b3b" stroke-width="1.3"/></g><rect x="27.1" y="382.4" width="10.3" height="7.7" fill="#5B2D90"/><rect x="27.1" y="382.4" width="10.3" height="1.2" fill="#3f1f6a"/><text x="28.4" y="388.6" font-family="Liberation Sans, sans-serif" font-size="5.4" font-weight="700" fill="#f4f0fa">C:\</text></svg>
</body></html>
